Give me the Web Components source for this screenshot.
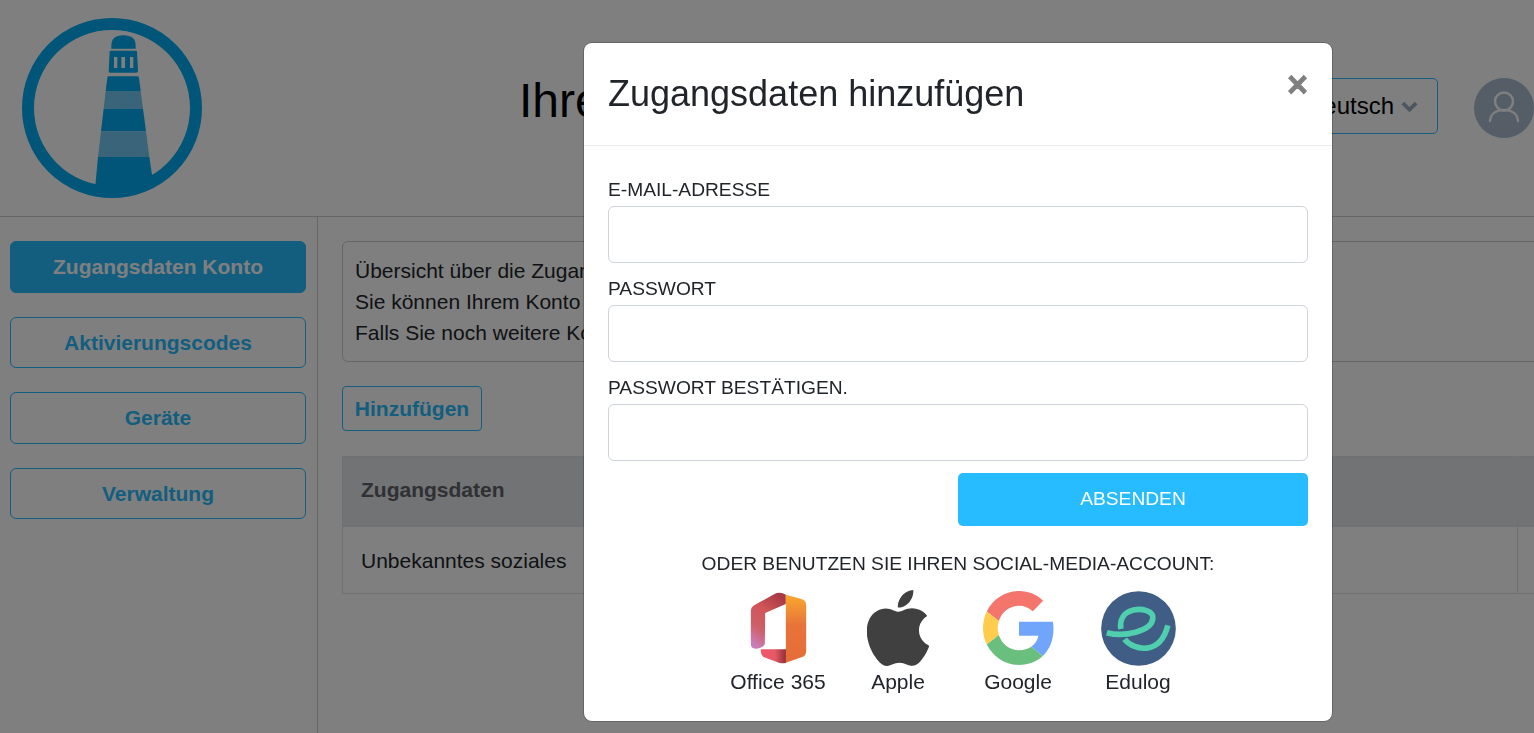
<!DOCTYPE html>
<html lang="de">
<head>
<meta charset="utf-8">
<title>Zugangsdaten</title>
<style>
    html, body { margin: 0; height: 100%; overflow: hidden; background: #fff; }
    body { font-family: "Liberation Sans", Arial, sans-serif; color: #212529; }
</style>
</head>
<body>
<account-page>
    <site-header slot="header"></site-header>
    <side-nav slot="nav">
        <nav-button active>Zugangsdaten Konto</nav-button>
        <nav-button>Aktivierungscodes</nav-button>
        <nav-button>Geräte</nav-button>
        <nav-button>Verwaltung</nav-button>
    </side-nav>
    <info-box>
        <div>Übersicht über die Zugang</div>
        <div>Sie können Ihrem Konto</div>
        <div>Falls Sie noch weitere Kon</div>
    </info-box>
    <add-button>Hinzufügen</add-button>
    <credentials-table></credentials-table>
</account-page>

<modal-dialog heading="Zugangsdaten hinzufügen">
    <form-field label="E-MAIL-ADRESSE"></form-field>
    <form-field label="PASSWORT"></form-field>
    <form-field label="PASSWORT BESTÄTIGEN."></form-field>
    <submit-row>ABSENDEN</submit-row>
    <social-list heading="ODER BENUTZEN SIE IHREN SOCIAL-MEDIA-ACCOUNT:">
        <social-link name="Office 365" icon="office"></social-link>
        <social-link name="Apple" icon="apple"></social-link>
        <social-link name="Google" icon="google"></social-link>
        <social-link name="Edulog" icon="edulog"></social-link>
    </social-list>
</modal-dialog>

<script>
// small helper so every element below sets its shadow the same way
function shadowOf(el, html) {
    const shadow = el.attachShadow({mode: 'open'});
    shadow.innerHTML = html;
    return shadow;
}

const ICONS = {
    office: `
        <svg style="margin-top:1px" width="57" height="72" viewBox="90 36 170 216" aria-hidden="true">
            <defs>
                <linearGradient id="o1" x1="0.7" y1="0" x2="0.2" y2="1">
                    <stop offset="0" stop-color="#a83a46"/>
                    <stop offset="0.35" stop-color="#cf5558"/>
                    <stop offset="0.7" stop-color="#cf5f68"/>
                    <stop offset="1" stop-color="#c97fbd"/>
                </linearGradient>
                <linearGradient id="o2" x1="0" y1="0" x2="0" y2="1">
                    <stop offset="0" stop-color="#f9a82f"/>
                    <stop offset="0.45" stop-color="#e8733a"/>
                    <stop offset="1" stop-color="#e56c38"/>
                </linearGradient>
                <linearGradient id="o3" x1="0" y1="0" x2="1" y2="0">
                    <stop offset="0" stop-color="#f2566e"/>
                    <stop offset="0.55" stop-color="#e65a66"/>
                    <stop offset="1" stop-color="#8e2f38"/>
                </linearGradient>
            </defs>
            <path fill="url(#o1)" d="M92 94Q92 82 102 76L163 42Q180 34 197 44L197 72L135 99L134 192Q126 206 106 206Q92 206 92 192Z"/>
            <path fill="url(#o3)" d="M122 208L198 208L198 248Q188 252 176 248L132 232Q121 226 122 208Z"/>
            <path fill="url(#o2)" d="M197 44L244 57Q258 61 258 76L258 214Q258 228 244 232L197 248Z"/>
        </svg>`,
    apple: `
        <svg style="margin-top:-1px;flex:none" width="62" height="76" viewBox="2.3 0 19.4 24" preserveAspectRatio="none" aria-hidden="true">
            <path fill="#404040" d="M12.152 6.896c-.948 0-2.415-1.078-3.96-1.04-2.04.027-3.91 1.183-4.961 3.014-2.117 3.675-.546 9.103 1.519 12.09 1.013 1.454 2.208 3.09 3.792 3.039 1.52-.065 2.09-.987 3.935-.987 1.831 0 2.35.987 3.96.948 1.637-.026 2.676-1.48 3.676-2.948 1.156-1.688 1.636-3.325 1.662-3.415-.039-.013-3.182-1.221-3.22-4.857-.026-3.04 2.48-4.494 2.597-4.559-1.429-2.09-3.623-2.324-4.39-2.376-2-.156-3.675 1.09-4.61 1.09zM15.53 3.83c.843-1.012 1.4-2.427 1.245-3.83-1.207.052-2.662.805-3.532 1.818-.78.896-1.454 2.338-1.273 3.714 1.338.104 2.715-.688 3.559-1.701"/>
        </svg>`,
    google: `
        <svg style="margin-left:1px" width="72" height="74" viewBox="0 0 48 48" preserveAspectRatio="none" aria-hidden="true">
            <path fill="#f3756b" d="M24 9.5c3.54 0 6.71 1.22 9.21 3.6l6.85-6.85C35.9 2.38 30.47 0 24 0 14.62 0 6.51 5.38 2.56 13.22l7.98 6.19C12.43 13.72 17.74 9.5 24 9.5z"/>
            <path fill="#71a5fb" d="M46.98 24.55c0-1.57-.15-3.09-.38-4.55H24v9.02h12.94c-.58 2.96-2.26 5.48-4.78 7.18l7.73 6c4.51-4.18 7.09-10.36 7.09-17.65z"/>
            <path fill="#ffcc4d" d="M10.53 28.59c-.48-1.45-.76-2.99-.76-4.59s.27-3.14.76-4.59l-7.98-6.19C.92 16.46 0 20.12 0 24c0 3.88.92 7.54 2.56 10.78l7.97-6.19z"/>
            <path fill="#6abf7f" d="M24 48c6.48 0 11.93-2.13 15.89-5.81l-7.73-6c-2.15 1.45-4.92 2.3-8.16 2.3-6.26 0-11.57-4.22-13.47-9.91l-7.98 6.19C6.51 42.62 14.62 48 24 48z"/>
        </svg>`,
    edulog: `
        <svg width="75" height="75" viewBox="423 33 224 225" aria-hidden="true">
            <circle cx="535" cy="145.5" r="112" fill="#3f5d85"/>
            <path fill="none" stroke="#4fcfad" stroke-width="17" d="M440 158C490 172 575 155 578 115C580 92 545 85 520 90C490 97 478 120 482 147"/>
            <path fill="none" stroke="#4fcfad" stroke-width="17" d="M493 178C520 212 600 228 623 136"/>
        </svg>`
};

class AccountPage extends HTMLElement {
    constructor() {
        super();
        shadowOf(this, `
            <style>
                :host { display: block; height: 733px; overflow: hidden; }
                .body { display: flex; height: 516px; }
                .main { flex: 1; min-width: 0; overflow: hidden; padding: 24px 0 0 24px; }
            </style>
            <slot name="header"></slot>
            <div class="body">
                <slot name="nav"></slot>
                <div class="main"><slot></slot></div>
            </div>
        `);
    }
}

class SiteHeader extends HTMLElement {
    constructor() {
        super();
        shadowOf(this, `
            <style>
                :host {
                    display: grid;
                    grid-template-columns: 519px 1fr auto 96px;
                    align-items: center;
                    height: 216px;
                    border-bottom: 1px solid #ccc;
                }
                .logo { padding: 18px 0 18px 22px; display: block; }
                svg { display: block; }
                h1 { margin: 0 0 14px; font-size: 48px; font-weight: 400; line-height: 1.2; color: #000; }
                .lang {
                    display: flex; align-items: center; gap: 7px;
                    height: 54px; padding: 0 19px 0 20px;
                    margin-bottom: 4px;
                    border: 1px solid #26bcff; border-radius: 5px;
                    font-size: 24px; color: #000;
                }
                .avatar { justify-self: end; margin-bottom: 0; }
            </style>
            <div class="logo">
                <svg width="180" height="180" viewBox="66 53 540 540" aria-hidden="true">
                    <circle cx="336" cy="323" r="252" fill="none" stroke="#00aaf0" stroke-width="36"/>
                    <path fill="#00aaf0" d="M334 145V136Q334 105 370 105Q407 105 407 136V145Z"/>
                    <path fill="#00aaf0" fill-rule="evenodd" d="M332 151H408Q411 151 411 154L414 212Q414 217 409 217H331Q326 217 326 212L329 154Q329 151 332 151ZM342 170V203H352V170ZM364 170V203H375V170ZM390 170V203H400V170Z"/>
                    <path fill="#00aaf0" d="M326 228H412Q416 228 417 232L422 272H317L322 232Q322 228 326 228Z"/>
                    <path fill="#74c8f2" d="M317 272H422L429 325H311Z"/>
                    <path fill="#00aaf0" d="M311 325H429L438 393H303Z"/>
                    <path fill="#74c8f2" d="M303 393H438L448 470H294Z"/>
                    <path fill="#00aaf0" d="M294 470H448L460 550L284 578Z"/>
                </svg>
            </div>
            <h1>Ihre</h1>
            <div class="lang">Deutsch
                <svg width="17" height="11" viewBox="0 0 17 11" aria-hidden="true">
                    <path d="M1.8 2.2L8.5 8.6L15.2 2.2" fill="none" stroke="#9aaabc" stroke-width="3.8"/>
                </svg>
            </div>
            <svg class="avatar" width="60" height="60" viewBox="0 0 60 60" aria-hidden="true">
                <circle cx="30" cy="30" r="30" fill="#abbccf"/>
                <circle cx="30" cy="23.5" r="9" fill="none" stroke="#fff" stroke-width="2.5"/>
                <path d="M16 43C16.5 36 22 32 30 32C38 32 43.5 36 44 43" fill="none" stroke="#fff" stroke-width="2.5" stroke-linecap="round"/>
            </svg>
        `);
    }
}

class SideNav extends HTMLElement {
    constructor() {
        super();
        shadowOf(this, `
            <style>
                :host {
                    display: flex; flex-direction: column; gap: 24px;
                    box-sizing: border-box; flex: none;
                    width: 318px; height: 100%;
                    padding: 24px 11px 0 10px;
                    border-right: 1px solid #ccc;
                }
            </style>
            <slot></slot>
        `);
    }
}

class NavButton extends HTMLElement {
    constructor() {
        super();
        shadowOf(this, `
            <style>
                :host {
                    display: flex; align-items: center; justify-content: center;
                    box-sizing: border-box; height: 51.5px; padding-top: 1px;
                    border: 1px solid #26bcff; border-radius: 6px;
                    font-size: 21px; font-weight: 700; color: #26bcff;
                }
                :host([active]) { background: #26bcff; color: #fff; }
            </style>
            <slot></slot>
        `);
    }
}

class InfoBox extends HTMLElement {
    constructor() {
        super();
        shadowOf(this, `
            <style>
                :host {
                    display: block; box-sizing: border-box;
                    width: 1300px; height: 121px;
                    padding: 13px 12px;
                    border: 1px solid #ccc; border-radius: 6px;
                    font-size: 21px; line-height: 31px; color: #212529;
                }
            </style>
            <slot></slot>
        `);
    }
}

class AddButton extends HTMLElement {
    constructor() {
        super();
        shadowOf(this, `
            <style>
                :host {
                    display: flex; align-items: center; justify-content: center;
                    box-sizing: border-box; width: 140px; height: 45px; padding-top: 1px;
                    margin: 24px 0 25px;
                    border: 1px solid #26bcff; border-radius: 4px;
                    font-size: 21px; font-weight: 700; color: #26bcff;
                }
            </style>
            <slot></slot>
        `);
    }
}

class CredentialsTable extends HTMLElement {
    constructor() {
        super();
        shadowOf(this, `
            <style>
                :host { display: block; width: 1300px; font-size: 21px; }
                table { border-collapse: collapse; width: 100%; table-layout: fixed; }
                th, td { border: 1px solid #dee2e6; padding: 0 18px; text-align: left; }
                th { background: #e4e6ea; height: 66px; padding-bottom: 2px; border-bottom-width: 2px; color: #5e6266; }
                td { height: 64px; padding-top: 2px; color: #212529; }
                .first { width: 1138px; }
            </style>
            <table>
                <tr><th class="first">Zugangsdaten</th><th></th></tr>
                <tr><td>Unbekanntes soziales</td><td></td></tr>
            </table>
        `);
    }
}

class ModalDialog extends HTMLElement {
    constructor() {
        super();
        shadowOf(this, `
            <style>
                :host {
                    position: fixed; inset: 0;
                    display: flex; align-items: flex-start;
                    padding: 43px 0 0 584px;
                    background: rgba(0, 0, 0, .5);
                }
                .dialog {
                    box-sizing: border-box; width: 748px; height: 678px;
                    background: #fff; border-radius: 8px;
                    box-shadow: 0 0 0 1px rgba(0, 0, 0, .2);
                }
                header {
                    display: flex; justify-content: space-between; align-items: center;
                    box-sizing: border-box; height: 103px; padding: 0 24px;
                    border-bottom: 1px solid #e9ecef;
                }
                h2 { margin: 0; font-size: 36px; font-weight: 400; color: #212529; }
                .close { font-size: 36px; font-weight: 700; line-height: 1; color: #000; opacity: .5; margin: -18px 0 0; -webkit-text-stroke: .8px #000; }
                .content { padding: 32px 24px 0; }
            </style>
            <div class="dialog">
                <header>
                    <h2>${this.getAttribute('heading')}</h2>
                    <span class="close">×</span>
                </header>
                <div class="content"><slot></slot></div>
            </div>
        `);
    }
}

class FormField extends HTMLElement {
    constructor() {
        super();
        shadowOf(this, `
            <style>
                :host { display: block; margin-bottom: 14px; }
                label { display: block; height: 28px; font-size: 19.2px; line-height: 24px; color: #212529; }
                input {
                    display: block; box-sizing: border-box; width: 100%; height: 57px;
                    border: 1px solid #ced4da; border-radius: 6px; background: #fff;
                }
            </style>
            <label>${this.getAttribute('label')}</label>
            <input type="text">
        `);
    }
}

class SubmitRow extends HTMLElement {
    constructor() {
        super();
        shadowOf(this, `
            <style>
                :host { display: flex; justify-content: flex-end; margin-top: -2px; }
                .btn {
                    display: flex; align-items: center; justify-content: center;
                    box-sizing: border-box; width: 350px; height: 53px; padding-bottom: 2px;
                    background: #26bcff; border-radius: 5px;
                    font-size: 19.2px; color: #fff;
                }
            </style>
            <div class="btn"><slot></slot></div>
        `);
    }
}

class SocialList extends HTMLElement {
    constructor() {
        super();
        shadowOf(this, `
            <style>
                :host { display: block; margin-top: 26px; }
                p { margin: 0 0 17px; height: 22px; text-align: center; font-size: 19.2px; line-height: 24px; color: #212529; }
                .row { display: flex; justify-content: center; }
            </style>
            <p>${this.getAttribute('heading')}</p>
            <div class="row"><slot></slot></div>
        `);
    }
}

class SocialLink extends HTMLElement {
    constructor() {
        super();
        shadowOf(this, `
            <style>
                :host {
                    display: flex; flex-direction: column; align-items: center;
                    width: 120px; font-size: 21px; color: #212529;
                }
                .icon { height: 75px; display: flex; align-items: flex-start; justify-content: center; }
                svg { display: block; }
                span { margin-top: 4px; line-height: 24px; }
            </style>
            <div class="icon">${ICONS[this.getAttribute('icon')]}</div>
            <span>${this.getAttribute('name')}</span>
        `);
    }
}

window.customElements.define('account-page', AccountPage);
window.customElements.define('site-header', SiteHeader);
window.customElements.define('side-nav', SideNav);
window.customElements.define('nav-button', NavButton);
window.customElements.define('info-box', InfoBox);
window.customElements.define('add-button', AddButton);
window.customElements.define('credentials-table', CredentialsTable);
window.customElements.define('modal-dialog', ModalDialog);
window.customElements.define('form-field', FormField);
window.customElements.define('submit-row', SubmitRow);
window.customElements.define('social-list', SocialList);
window.customElements.define('social-link', SocialLink);
</script>
</body>
</html>
